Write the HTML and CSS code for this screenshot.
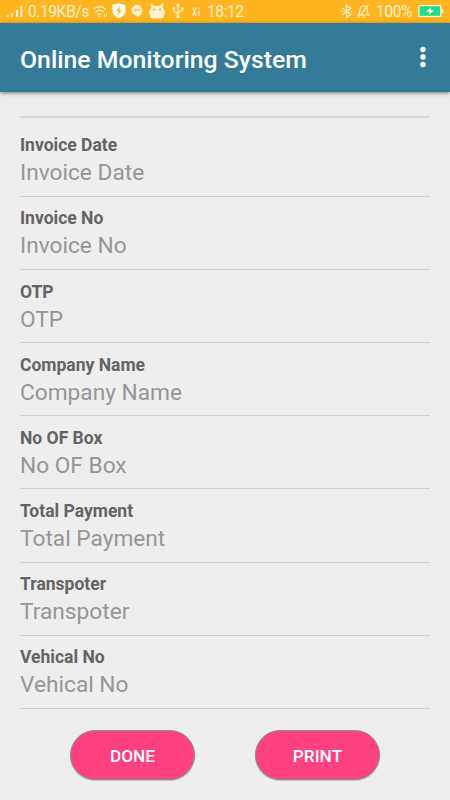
FILE: index.html
```
<!DOCTYPE html>
<html lang="en">

<head>
    <meta charset="UTF-8">
    <title>Online Monitoring System</title>
    <link rel="stylesheet" href="styles.css">
</head>

<body>
    <div class="status-bar">
        <svg class="signal" width="17" height="22" viewBox="0 0 17 22">
            <path d="M1 15h1.600v2H1zM5.200 13h1.800v4h-1.800zM10 10h2v7h-2zM14.400 6h2v11h-2z" />
        </svg>
        <span class="speed">0.19KB/s</span>
        <svg class="wifi line" width="16" height="22" viewBox="0 0 16 22">
            <path d="M1 9.400Q7.500 3.800 14 9.400M3.200 12Q7.500 8.300 11.800 12M5.400 14.500Q7.500 12.700 9.600 14.500" />
            <circle class="fill" cx="7.500" cy="16.300" r="1" />
            <path d="M12.500 14v3M14.500 13v3" stroke-width="1" />
        </svg>
        <svg class="shield" width="14" height="22" viewBox="0 0 14 22">
            <path d="M7 3.200L13.400 5v6q0 4.600-6.400 7.300Q.6 15.600.6 11V5z" />
            <path class="bolt" d="M8.400 5.800L4 11.200h2.500L5.600 15.400 10 9.900H7.500z" />
        </svg>
        <svg class="chat" width="12" height="22" viewBox="0 0 12 22">
            <path d="M6 4.800a5.400 5.400 0 0 1 5.400 5.400c0 3.400-2.700 5.900-5.400 7.300v-1.900a5.400 5.400 0 0 1 0-10.800z" />
            <path class="bolt" d="M3.500 8.800h2v2l-1 1.200v-1.400h-1zM6.600 8.800h2v2l-1 1.200v-1.400h-1z" />
        </svg>
        <svg class="robot" width="16" height="22" viewBox="0 0 16 22">
            <path d="M2.400 3.500L5 5.700h6l2.600-2.200.8.500-.7 3.200q1 1.200 1.100 2.800h1v4.500h-1v1.500q0 2.400-2.400 2.400H3.600q-2.400 0-2.400-2.400v-1.500h-1V10h1q.1-1.600 1.100-2.800L1.600 4z" />
            <circle class="bolt" cx="5" cy="9.600" r="1.200" />
            <circle class="bolt" cx="11" cy="9.600" r="1.200" />
        </svg>
        <svg class="usb line" width="12" height="22" viewBox="0 0 12 22">
            <path d="M6 5v11M1.800 9v2.200L6 13.500M10.200 8.500v2.200L6 12.800" />
            <path class="fill" d="M6 3l2.200 3H3.800z" />
            <circle class="fill" cx="6" cy="16.700" r="1.800" />
            <circle class="fill" cx="1.800" cy="8.500" r="1.400" />
            <path class="fill" d="M8.900 7.200h2.600v2.600H8.900z" />
        </svg>
        <svg class="xi line" width="8" height="22" viewBox="0 0 8 22">
            <path d="M.8 7.500l3.400 8.200M4.200 7.500L.8 15.700M6.900 7.500v1.500M6.900 10.700v5" />
        </svg>
        <span class="clock">18:12</span>
        <svg class="bluetooth line" width="12" height="22" viewBox="0 0 12 22">
            <path d="M1.200 8.200l8.600 6.400-4.200 3.200V5.200l4.200 3.200-8.600 6.400" />
            <path d="M.2 11.500h1.400M9.800 11.500h1.600" />
        </svg>
        <svg class="bell line" width="13" height="22" viewBox="0 0 13 22">
            <path d="M1 15q1.900-1.500 1.900-5 .3-3.700 3.600-4 3.300.3 3.600 4 0 3.500 1.900 5zM5.200 17h2.600M11.600 4.500L1.200 17.800" />
        </svg>
        <span class="percent">100%</span>
        <svg class="battery" width="26" height="22" viewBox="0 0 26 22">
            <path d="M.4 5h22.800v12H.4zM23.200 9h2v4.200h-2z" />
            <path class="charge" d="M1.600 6.200h20.400v9.600H1.600z" />
            <path d="M13.200 7L8 11.700h3.500L10.500 15l5.700-4.700h-3.500z" />
        </svg>
    </div>

    <div class="toolbar">
        <h1>Online Monitoring System</h1>
        <svg class="menu" width="6" height="22" viewBox="0 0 6 22">
            <circle cx="3" cy="3.500" r="2.700" />
            <circle cx="3" cy="11" r="2.700" />
            <circle cx="3" cy="18.500" r="2.700" />
        </svg>
    </div>

    <div class="details">
        <div class="field">
            <h2>Invoice Date</h2>
            <p>Invoice Date</p>
        </div>
        <div class="field">
            <h2>Invoice No</h2>
            <p>Invoice No</p>
        </div>
        <div class="field">
            <h2>OTP</h2>
            <p>OTP</p>
        </div>
        <div class="field">
            <h2>Company Name</h2>
            <p>Company Name</p>
        </div>
        <div class="field">
            <h2>No OF Box</h2>
            <p>No OF Box</p>
        </div>
        <div class="field">
            <h2>Total Payment</h2>
            <p>Total Payment</p>
        </div>
        <div class="field">
            <h2>Transpoter</h2>
            <p>Transpoter</p>
        </div>
        <div class="field">
            <h2>Vehical No</h2>
            <p>Vehical No</p>
        </div>
    </div>

    <div class="actions">
        <button type="button">DONE</button>
        <button type="button">PRINT</button>
    </div>
</body>

</html>
```
FILE: styles.css
```
* {
    box-sizing: border-box;
}

body {
    font-family: Roboto, sans-serif;
    background-color: #eeeeee;
    margin: 0;
    height: 800px;
    overflow: hidden;
}

h1,
h2,
p {
    margin: 0;
}

svg {
    flex: none;
    display: block;
}

.status-bar {
    display: flex;
    height: 23px;
    padding-left: 6px;
    background-color: #ffb520;
    color: #fff0cf;
    fill: #fff0cf;
    font-size: 15.7px;
    letter-spacing: -0.5px;
    line-height: 24px;
    white-space: nowrap;
}

.line {
    fill: none;
    stroke: #fff0cf;
    stroke-width: 1.2;
}

.line .fill {
    fill: #fff0cf;
    stroke: none;
}

.bolt {
    fill: #ffb520;
}

.speed {
    width: 61px;
    margin-left: 5px;
}

.wifi {
    margin-left: 3px;
}

.shield {
    margin-left: 4px;
    fill: #ffffff;
}

.chat {
    margin-left: 5px;
}

.robot {
    margin-left: 6px;
}

.usb {
    margin-left: 7px;
}

.xi {
    margin-left: 8px;
}

.clock {
    margin-left: 7px;
}

.bluetooth {
    margin-left: auto;
}

.bell {
    margin-left: 4px;
}

.percent {
    width: 36px;
    margin-left: 6px;
}

.battery {
    margin: 0 6px 0 6px;
}

.battery .charge {
    fill: #20df8c;
}

.toolbar {
    display: flex;
    align-items: center;
    justify-content: space-between;
    height: 69px;
    padding: 3px 24px 0 20px;
    background-color: #347b99;
    box-shadow: 0 1px 4px rgba(0, 0, 0, 0.5);
}

.toolbar h1 {
    color: #ffffff;
    font-size: 24.8px;
    font-weight: 500;
}

.menu {
    fill: #ffffff;
    margin-bottom: 4px;
}

.details {
    margin: 24px 20px 0;
    padding-top: 5.9px;
    border-top: 2px solid #d9d9d9;
}

.field {
    height: 73.12px;
    padding-top: 10.4px;
    border-bottom: 1px solid #cfcfcf;
}

.field h2 {
    color: #646464;
    font-size: 17.5px;
    font-weight: 700;
    line-height: 22px;
}

.field p {
    color: #969696;
    font-size: 22.7px;
    line-height: 34px;
}

.actions {
    display: flex;
    justify-content: center;
    gap: 60px;
    margin-top: 21.1px;
}

.actions button {
    width: 125px;
    height: 50px;
    padding: 2px 0 0;
    background-color: #ff4081;
    color: #ffffff;
    border: 1px solid #7f8fa9;
    border-radius: 25px;
    box-shadow: 0 1px 1px rgba(0, 0, 0, 0.2);
    font-family: Roboto, sans-serif;
    font-size: 17.3px;
    font-weight: 500;
    cursor: pointer;
}
```
